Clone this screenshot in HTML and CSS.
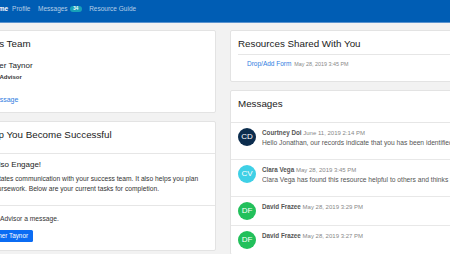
FILE: index.html
```html
<!DOCTYPE html>
<html lang="en">
<head>
    <meta charset="UTF-8">
    <meta name="viewport" content="width=device-width, initial-scale=1.0">
    <title>Also Engage - Home</title>
    <link rel="stylesheet" href="styles.css">
</head>
<body>
    <nav class="navbar">
        <div class="nav-inner">
            <span class="brand">AE</span>
            <a class="nav-link active" href="#">Home</a>
            <a class="nav-link" href="#">Profile</a>
            <a class="nav-link" href="#">Messages<span class="badge">34</span></a>
            <a class="nav-link" href="#">Resource Guide</a>
        </div>
    </nav>

    <main class="page">
        <div class="column">
            <section class="card card-body">
                <h5 class="card-title">Our Success Team</h5>
                <div class="advisor">
                    <div class="advisor-avatar">TT</div>
                    <div class="advisor-info">
                        <div class="advisor-name">Tanner Taynor</div>
                        <div class="advisor-role">Major Advisor</div>
                        <a class="advisor-link" href="#">
                            <svg width="7" height="6" viewBox="0 0 14 12"><rect x="1" y="1" width="12" height="10" rx="1" fill="none" stroke="currentColor" stroke-width="1.6"/><path d="M1 2l6 5 6-5" fill="none" stroke="currentColor" stroke-width="1.6"/></svg>Message
                        </a>
                    </div>
                </div>
            </section>

            <section class="card">
                <div class="card-header">
                    <h5 class="card-title">We Will Help You Become Successful</h5>
                </div>
                <div class="card-section intro">
                    <h6>Welcome To Also Engage!</h6>
                    <p>Our website facilitates communication with your success team. It also helps you plan ahead of your coursework. Below are your current tasks for completion.</p>
                </div>
                <div class="card-section task">
                    <p>To do: Send your Advisor a message.</p>
                    <a class="btn" href="#">Message to Tanner Taynor</a>
                </div>
            </section>
        </div>

        <div class="column">
            <section class="card card-body">
                <h5 class="card-title">Resources Shared With You</h5>
                <ul class="resource-list">
                    <li><a href="#">Drop/Add Form</a> <span class="meta">May 28, 2019 3:45 PM</span></li>
                </ul>
            </section>

            <section class="card">
                <div class="card-header">
                    <h5 class="card-title">Messages</h5>
                </div>
                <div class="msg">
                    <div class="msg-avatar navy">CD</div>
                    <div class="msg-text">
                        <div class="msg-head">Courtney Doi <span class="msg-date">June 11, 2019 2:14 PM</span></div>
                        <p class="msg-body">Hello Jonathan, our records indicate that you has been identified as a student who may benefit from tutoring.</p>
                    </div>
                </div>
                <div class="msg">
                    <div class="msg-avatar cyan">CV</div>
                    <div class="msg-text">
                        <div class="msg-head">Clara Vega <span class="msg-date">May 28, 2019 3:45 PM</span></div>
                        <p class="msg-body">Clara Vega has found this resource helpful to others and thinks it may help you too.</p>
                    </div>
                </div>
                <div class="msg">
                    <div class="msg-avatar green">DF</div>
                    <div class="msg-text">
                        <div class="msg-head">David Frazee <span class="msg-date">May 28, 2019 3:29 PM</span></div>
                    </div>
                </div>
                <div class="msg">
                    <div class="msg-avatar green">DF</div>
                    <div class="msg-text">
                        <div class="msg-head">David Frazee <span class="msg-date">May 28, 2019 3:27 PM</span></div>
                    </div>
                </div>
            </section>
        </div>
    </main>
</body>
</html>
```

FILE: styles.css
```css
* {
    box-sizing: border-box;
}

body {
    margin: 0;
    background: #f2f2f2;
    font-family: 'Liberation Sans', Arial, sans-serif;
    color: #212529;
    overflow: hidden;
}

a {
    text-decoration: none;
}

/* Top navigation */
.navbar {
    height: 23px;
    background: #005db4;
    border-bottom: 1px solid #5a93cf;
}

.nav-inner {
    display: flex;
    align-items: center;
    margin-left: -60px;
    padding: 5px 0 0 8px;
}

.brand {
    width: 36px;
    margin-right: 6px;
    color: #fff;
    font-weight: bold;
    font-size: 8px;
    line-height: 8px;
}

.nav-link {
    display: flex;
    align-items: center;
    color: rgba(255, 255, 255, 0.7);
    font-size: 6.5px;
    line-height: 8px;
    margin-right: 7.5px;
}

.nav-link.active {
    color: #fff;
    font-weight: bold;
    margin-right: 4px;
}

.badge {
    display: inline-block;
    margin-left: 2px;
    padding: 0 3.5px;
    height: 6px;
    line-height: 6px;
    border-radius: 3px;
    background: #17a2b8;
    color: #fff;
    font-size: 4.5px;
    font-weight: bold;
}

/* Page grid */
.page {
    display: grid;
    grid-template-columns: 276px 420px;
    column-gap: 14px;
    align-items: start;
    margin: 7px 0 0 -60px;
}

.column {
    display: flex;
    flex-direction: column;
    gap: 7.5px;
}

.card {
    background: #fff;
    border: 1px solid #e3e3e3;
    border-radius: 2px;
}

.card-body {
    padding: 7px;
}

.card-header {
    padding: 7px 7px 8px;
    border-bottom: 1px solid #e6e6e6;
}

.card-title {
    margin: 0 0 4px;
    font-size: 9.8px;
    line-height: 12px;
    font-weight: normal;
    color: #222;
}

/* Success team */
.advisor {
    display: flex;
    padding-top: 7px;
}

.advisor-avatar {
    width: 28px;
    height: 28px;
    margin-right: 6px;
    border-radius: 50%;
    background: #0c2d4e;
    color: #fff;
    font-size: 9px;
    line-height: 28px;
    text-align: center;
}

.advisor-name {
    font-size: 8px;
    line-height: 10px;
}

.advisor-role {
    margin-top: 2px;
    font-size: 6px;
    line-height: 9px;
    font-weight: bold;
    color: #333;
}

.advisor-link {
    display: flex;
    align-items: center;
    margin-top: 13px;
    font-size: 7px;
    line-height: 10px;
    color: #2f7de1;
}

.advisor-link svg {
    margin-right: 1px;
}

/* Getting started */
.card-section {
    padding: 6px 7px;
}

.card-section h6 {
    margin: 0 0 4px;
    font-size: 8px;
    line-height: 10px;
    font-weight: normal;
    color: #222;
}

.card-section p {
    margin: 0 0 5px;
    font-size: 6.7px;
    line-height: 10px;
    color: #333;
}

.task {
    padding: 8px 7px;
    border-top: 1px solid #e6e6e6;
}

.task p {
    margin: 0 0 6px;
}

.btn {
    display: block;
    width: max-content;
    height: 12px;
    padding: 0 5px 0 6px;
    border-radius: 1.5px;
    background: #0b6cf3;
    color: #fff;
    font-size: 6.3px;
    line-height: 12px;
}

/* Resources */
.resource-list {
    list-style: none;
    margin: 0;
    padding: 0;
    border-top: 1px solid #e6e6e6;
}

.resource-list li {
    padding: 4px 9px 5px;
    font-size: 6.5px;
    line-height: 10px;
}

.resource-list a {
    color: #2f7de1;
}

.meta {
    margin-left: 1px;
    font-size: 5.4px;
    color: #888;
}

/* Messages */
.msg {
    display: flex;
    padding: 5px 7px;
    border-top: 1px solid #e8e8e8;
}

.card-header + .msg {
    border-top: 0;
}

.msg-avatar {
    flex-shrink: 0;
    width: 18px;
    height: 18px;
    margin-right: 6px;
    border-radius: 50%;
    color: #fff;
    font-size: 8px;
    line-height: 18px;
    text-align: center;
}

.navy {
    background: #0c2d4e;
}

.cyan {
    background: #3fd0e6;
}

.green {
    background: #22c05b;
}

.msg-text {
    flex: 1;
    min-width: 0;
}

.msg-head {
    font-size: 6.3px;
    line-height: 9.6px;
    font-weight: bold;
    color: #555;
    white-space: nowrap;
}

.msg-date {
    font-size: 6px;
    font-weight: normal;
    color: #888;
}

.msg-body {
    margin: 0 0 6px;
    font-size: 6.7px;
    line-height: 9.6px;
    color: #555;
    white-space: nowrap;
    overflow: hidden;
    text-overflow: ellipsis;
}
```
